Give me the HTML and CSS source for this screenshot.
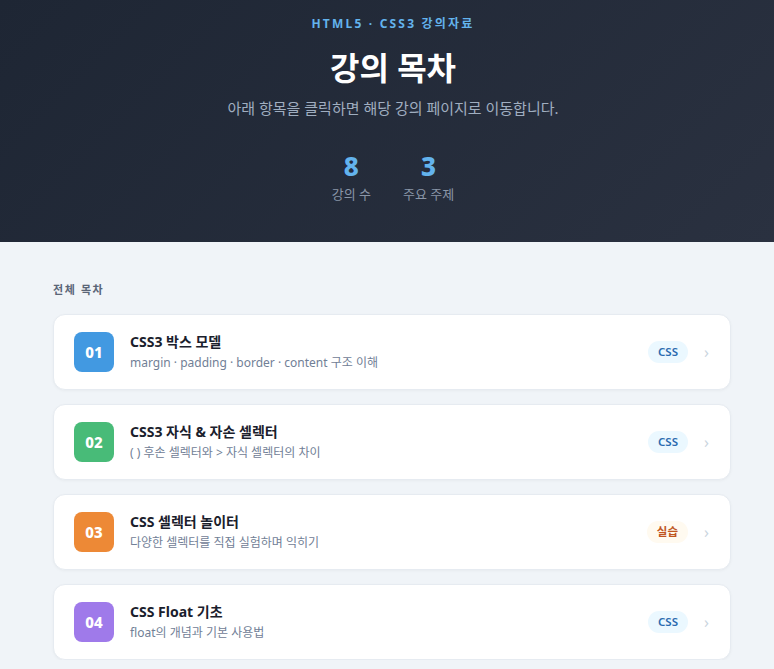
FILE: index.html
```html
<!DOCTYPE html>
<html lang="ko">
<head>
    <meta charset="UTF-8">
    <meta name="viewport" content="width=device-width, initial-scale=1.0">
    <title>강의 목차</title>
    <link rel="stylesheet" href="styles.css">
</head>
<body>

    <header class="hero">
        <p class="eyebrow">HTML5 · CSS3 강의자료</p>
        <h1 class="hero-title">강의 목차</h1>
        <p class="hero-desc">아래 항목을 클릭하면 해당 강의 페이지로 이동합니다.</p>
        <div class="stats">
            <div class="stat">
                <strong class="stat-num">8</strong>
                <span class="stat-label">강의 수</span>
            </div>
            <div class="stat">
                <strong class="stat-num">3</strong>
                <span class="stat-label">주요 주제</span>
            </div>
        </div>
    </header>

    <main class="content">
        <h2 class="section-label">전체 목차</h2>
        <ul class="lesson-list">
            <li>
                <a class="lesson" href="#">
                    <span class="num blue">01</span>
                    <span class="info">
                        <span class="lesson-title">CSS3 박스 모델</span>
                        <span class="lesson-desc">margin · padding · border · content 구조 이해</span>
                    </span>
                    <span class="tag tag-css">CSS</span>
                    <span class="arrow">›</span>
                </a>
            </li>
            <li>
                <a class="lesson" href="#">
                    <span class="num green">02</span>
                    <span class="info">
                        <span class="lesson-title">CSS3 자식 &amp; 자손 셀렉터</span>
                        <span class="lesson-desc">( ) 후손 셀렉터와 &gt; 자식 셀렉터의 차이</span>
                    </span>
                    <span class="tag tag-css">CSS</span>
                    <span class="arrow">›</span>
                </a>
            </li>
            <li>
                <a class="lesson" href="#">
                    <span class="num orange">03</span>
                    <span class="info">
                        <span class="lesson-title">CSS 셀렉터 놀이터</span>
                        <span class="lesson-desc">다양한 셀렉터를 직접 실험하며 익히기</span>
                    </span>
                    <span class="tag tag-lab">실습</span>
                    <span class="arrow">›</span>
                </a>
            </li>
            <li>
                <a class="lesson" href="#">
                    <span class="num purple">04</span>
                    <span class="info">
                        <span class="lesson-title">CSS Float 기초</span>
                        <span class="lesson-desc">float의 개념과 기본 사용법</span>
                    </span>
                    <span class="tag tag-css">CSS</span>
                    <span class="arrow">›</span>
                </a>
            </li>
        </ul>
    </main>

</body>
</html>
```

FILE: styles.css
```css
* {
    padding: 0;
    margin: 0;
    box-sizing: border-box;
}
body {
    font-family: "Noto Sans", "Noto Sans CJK KR", sans-serif;
    background: #f0f4f8;
    color: #1a202c;
}
.hero {
    background: linear-gradient(135deg, #1e2634 0%, #2a3140 100%);
    padding: 16px 0 40px 12px;
    text-align: center;
}
.eyebrow {
    font-size: 12px;
    line-height: 16px;
    font-weight: 700;
    letter-spacing: 2.2px;
    color: #63b3ed;
}
.hero-title {
    margin-top: 15px;
    font-size: 32px;
    line-height: 42px;
    font-weight: 700;
    color: #ffffff;
}
.hero-desc {
    margin-top: 9px;
    font-size: 15px;
    line-height: 20px;
    color: #a0aec0;
}
.stats {
    display: flex;
    justify-content: center;
    gap: 32px;
    margin-top: 32px;
}
.stat {
    display: flex;
    flex-direction: column;
    align-items: center;
}
.stat-num {
    font-size: 26px;
    line-height: 32px;
    font-weight: 800;
    color: #63b3ed;
}
.stat-label {
    margin-top: 4px;
    font-size: 13px;
    line-height: 16px;
    color: #8a96a8;
}
.content {
    width: 678px;
    margin-left: 53px;
    padding-top: 40px;
}
.section-label {
    font-size: 11px;
    line-height: 16px;
    font-weight: 700;
    letter-spacing: 1.6px;
    color: #5a6577;
    margin-bottom: 16px;
}
.lesson-list {
    list-style-type: none;
    display: flex;
    flex-direction: column;
    gap: 14px;
}
.lesson {
    display: flex;
    align-items: center;
    padding: 17px 19px 17px 20px;
    background: #ffffff;
    border: 1px solid #e6ebf1;
    border-radius: 12px;
    box-shadow: 0 1px 3px rgba(0,0,0,0.04);
    text-decoration: none;
    color: inherit;
}
.num {
    flex: none;
    width: 40px;
    height: 40px;
    border-radius: 8px;
    display: flex;
    align-items: center;
    justify-content: center;
    color: #ffffff;
    font-size: 15px;
    font-weight: 800;
}
.blue { background: #4299e1; }
.green { background: #48bb78; }
.orange { background: #ed8936; }
.purple { background: #9f7aea; }
.info {
    flex: 1;
    display: flex;
    flex-direction: column;
    margin-left: 16px;
}
.lesson-title {
    font-size: 14px;
    line-height: 20px;
    font-weight: 700;
    color: #1a202c;
}
.lesson-desc {
    margin-top: 2px;
    font-size: 12px;
    line-height: 18px;
    color: #718096;
}
.tag {
    font-size: 11.5px;
    line-height: 16px;
    font-weight: 600;
    padding: 3px 10px;
    border-radius: 11px;
}
.tag-css { background: #ebf8ff; color: #2b6cb0; }
.tag-lab { background: #fffaf0; color: #c05621; }
.arrow {
    margin-left: 16px;
    width: 7px;
    font-size: 16px;
    line-height: 16px;
    color: #cbd5e0;
}
```
